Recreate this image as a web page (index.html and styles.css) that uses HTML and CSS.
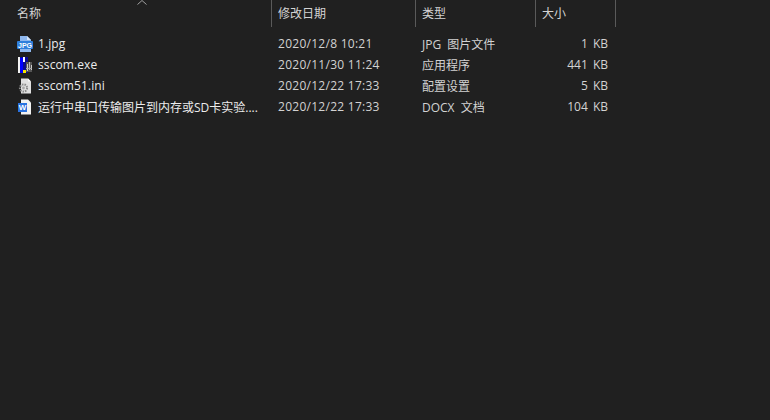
FILE: index.html
```html
<!DOCTYPE html>
<html lang="zh-CN">
<head>
    <meta charset="UTF-8">
    <title>文件列表</title>
    <link rel="stylesheet" href="styles.css">
</head>
<body>
    <svg class="sort-arrow" width="10" height="5" viewBox="0 0 10 5"><path d="M0.5 4.5 L5 0.5 L9.5 4.5" fill="none" stroke="#a0a0a0"/></svg>
    <div class="header">
        <div class="col-name head-cell">名称</div>
        <div class="col-date head-cell">修改日期</div>
        <div class="col-type head-cell">类型</div>
        <div class="col-size head-cell">大小</div>
    </div>
    <div class="rows">
        <div class="row">
            <div class="col-name cell">
                <svg class="icon" width="16" height="16" viewBox="0 0 16 16">
                    <path d="M3 0 H10 L14 4 V16 H3 Z" fill="#8fb8ee"/>
                    <path d="M10 0 L14 4 H10 Z" fill="#d6e6fa"/>
                    <rect x="0" y="5" width="16" height="8" rx="1" fill="#2f7fdc"/>
                    <text class="icon-label" x="8" y="11.6" text-anchor="middle" textLength="14" lengthAdjust="spacingAndGlyphs">JPG</text>
                </svg>
                <span class="fname">1.jpg</span>
            </div>
            <div class="col-date cell">2020/12/8 10:21</div>
            <div class="col-type cell">JPG 图片文件</div>
            <div class="col-size cell">1 KB</div>
        </div>
        <div class="row">
            <div class="col-name cell">
                <svg class="icon" width="16" height="16" viewBox="0 0 16 16">
                    <rect x="1" y="0" width="10" height="16" fill="#0a0a90"/>
                    <rect x="1" y="0" width="2" height="16" fill="#f4f4f4"/>
                    <rect x="3" y="1" width="3" height="15" fill="#0000ff"/>
                    <rect x="6" y="0" width="2" height="5" fill="#fff"/>
                    <rect x="6" y="13" width="3" height="3" fill="#f5e400"/>
                    <rect x="9" y="5" width="6" height="10" fill="#555"/>
                    <rect x="10" y="7" width="1" height="7" fill="#ccc"/>
                    <rect x="12" y="5" width="1" height="8" fill="#bbb"/>
                    <rect x="14" y="8" width="1" height="5" fill="#ccc"/>
                    <rect x="9" y="11" width="6" height="1" fill="#aaa"/>
                </svg>
                <span class="fname">sscom.exe</span>
            </div>
            <div class="col-date cell">2020/11/30 11:24</div>
            <div class="col-type cell">应用程序</div>
            <div class="col-size cell">441 KB</div>
        </div>
        <div class="row">
            <div class="col-name cell">
                <svg class="icon" width="16" height="16" viewBox="0 0 16 16">
                    <path d="M4 0.5 H11 L14 3.5 V15.5 H4 Z" fill="#e0e0e0"/>
                    <path d="M11 0.5 L14 3.5 H11 Z" fill="#f8f8f8"/>
                    <circle cx="6.5" cy="10" r="3.6" fill="none" stroke="#8a8a8a" stroke-width="2" stroke-dasharray="1.5 1"/>
                    <circle cx="6.5" cy="10" r="1.4" fill="#a8a8a8"/>
                </svg>
                <span class="fname">sscom51.ini</span>
            </div>
            <div class="col-date cell">2020/12/22 17:33</div>
            <div class="col-type cell">配置设置</div>
            <div class="col-size cell">5 KB</div>
        </div>
        <div class="row">
            <div class="col-name cell">
                <svg class="icon" width="16" height="16" viewBox="0 0 16 16">
                    <path d="M4 0.5 H11 L14 3.5 V15.5 H4 Z" fill="#f2f2f2"/>
                    <rect x="1" y="4" width="9" height="9" fill="#2a72e0"/>
                    <text class="icon-label word-mark" x="5.5" y="11" text-anchor="middle">W</text>
                </svg>
                <span>运行中串口传输图片到内存或SD卡实验....</span>
            </div>
            <div class="col-date cell">2020/12/22 17:33</div>
            <div class="col-type cell">DOCX 文档</div>
            <div class="col-size cell">104 KB</div>
        </div>
    </div>
</body>
</html>
```
FILE: styles.css
```css
html, body {
    height: 100%;
}

body {
    margin: 0;
    background-color: #202020;
    color: #dedede;
    font-family: "Open Sans", "Noto Sans CJK SC", sans-serif;
    font-size: 12px;
    overflow: hidden;
    position: relative;
}

.sort-arrow {
    position: absolute;
    left: 137px;
    top: 0;
}

.header {
    display: flex;
    height: 27px;
    margin-bottom: 6px;
}

.head-cell {
    box-sizing: border-box;
    height: 27px;
    line-height: 27px;
    border-right: 1px solid #5a5a5a;
    color: #d4d4d4;
}

.rows {
    display: flex;
    flex-direction: column;
}

.row {
    display: flex;
    height: 21px;
    align-items: center;
}

.col-name {
    width: 272px;
    padding-left: 17px;
    box-sizing: border-box;
}

.col-date {
    width: 144px;
    padding-left: 6px;
    box-sizing: border-box;
}

.col-type {
    width: 120px;
    padding-left: 6px;
    box-sizing: border-box;
}

.col-size {
    width: 80px;
    padding-left: 6px;
    box-sizing: border-box;
}

.cell {
    white-space: nowrap;
    color: #d2d2d2;
}

.row .col-name {
    display: flex;
    align-items: center;
    gap: 5px;
    color: #ececec;
}

.row .col-date {
    letter-spacing: 0.27px;
}

.row .col-type {
    word-spacing: 3px;
}

.row .col-size {
    text-align: right;
    padding-right: 8px;
    word-spacing: 2px;
}

.fname {
    letter-spacing: 0.1px;
}

.icon {
    flex-shrink: 0;
}

.icon-label {
    fill: #fff;
    font-family: "Liberation Sans", sans-serif;
    font-size: 7.5px;
    font-weight: bold;
}

.word-mark {
    font-size: 8px;
}
```
